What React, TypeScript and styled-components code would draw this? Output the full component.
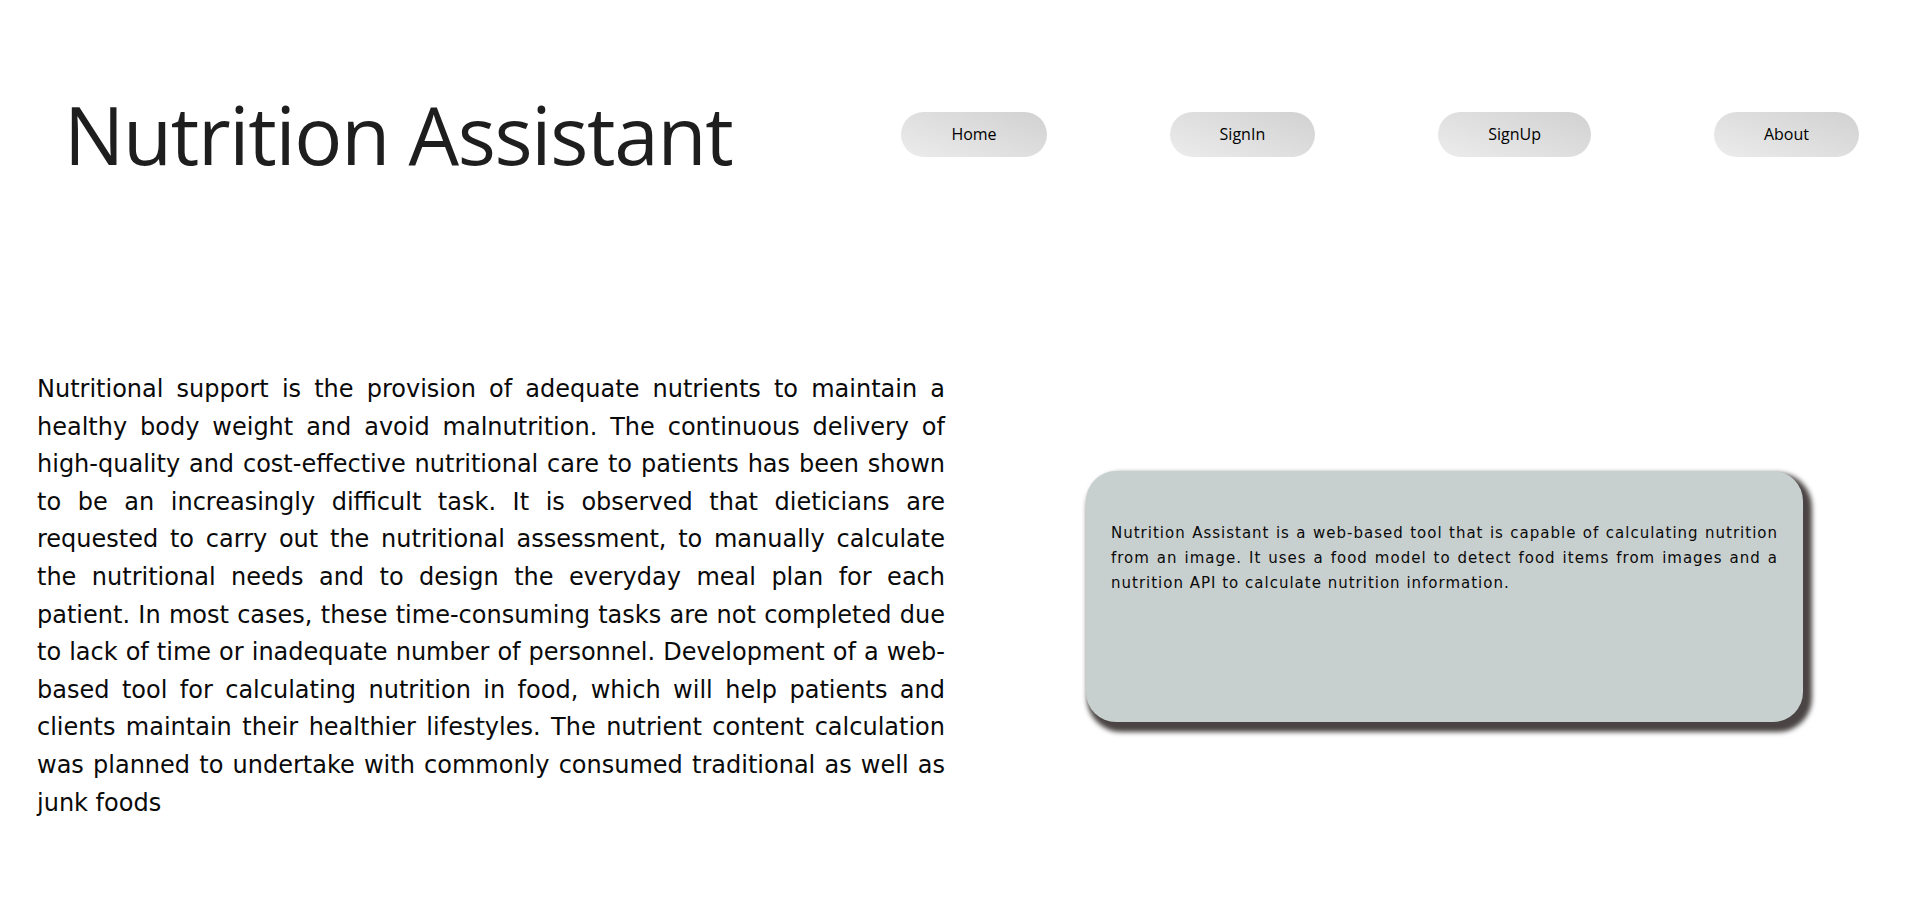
import React from "react";
import styled, { createGlobalStyle } from "styled-components";

const GlobalStyle = createGlobalStyle`
  html, body {
    margin: 0;
    padding: 0;
    background: #ffffff;
  }
  * { box-sizing: border-box; }
`;

const Page = styled.div`
  width: 100%;
  background: #ffffff;
`;

const Header = styled.header`
  display: flex;
  align-items: center;
  padding: 94px 61px 0 64px;
`;

const Title = styled.h1`
  margin: 0;
  font-family: "Open Sans", "Noto Sans", sans-serif;
  font-weight: 400;
  font-size: 80px;
  line-height: 80px;
  letter-spacing: -1.3px;
  color: #1e1e1e;
  white-space: nowrap;
`;

const Nav = styled.nav`
  margin-left: auto;
  display: flex;
  align-items: center;
  gap: 123px;
`;

const NavButton = styled.a`
  display: flex;
  align-items: center;
  justify-content: center;
  height: 45px;
  padding: 0 50px;
  border-radius: 23px;
  background: linear-gradient(20deg, #ececec 0%, #d1d1d1 100%);
  font-family: "Open Sans", "Noto Sans", sans-serif;
  font-size: 16px;
  color: #000000;
  text-decoration: none;
  cursor: pointer;
`;

const Main = styled.main`
  display: grid;
  grid-template-columns: 908px 717px;
  column-gap: 141px;
  align-items: center;
  padding: 197px 0 0 37px;
`;

const Intro = styled.p`
  margin: 0;
  font-family: "DejaVu Sans", Verdana, sans-serif;
  font-size: 24px;
  line-height: 37.6px;
  text-align: justify;
  color: #0a0a0a;
`;

const Card = styled.section`
  min-height: 251px;
  padding: 50px 25px 30px 25px;
  background: #c8d0cf;
  border-radius: 30px;
  box-shadow: 5px 6px 5px 4px #4a4444;
`;

const CardText = styled.p`
  margin: 0;
  font-family: "DejaVu Sans", Verdana, sans-serif;
  font-size: 15px;
  line-height: 25px;
  letter-spacing: 1px;
  text-align: justify;
  color: #0a0a0a;
`;

const navItems = ["Home", "SignIn", "SignUp", "About"];

export default function App() {
  return (
    <Page>
      <GlobalStyle />
      <Header>
        <Title>Nutrition Assistant</Title>
        <Nav>
          {navItems.map((item) => (
            <NavButton key={item}>{item}</NavButton>
          ))}
        </Nav>
      </Header>
      <Main>
        <Intro>
          Nutritional support is the provision of adequate nutrients to maintain a healthy body
          weight and avoid malnutrition. The continuous delivery of high-quality and
          cost-effective nutritional care to patients has been shown to be an increasingly
          difficult task. It is observed that dieticians are requested to carry out the
          nutritional assessment, to manually calculate the nutritional needs and to design the
          everyday meal plan for each patient. In most cases, these time-consuming tasks are not
          completed due to lack of time or inadequate number of personnel. Development of a
          web-based tool for calculating nutrition in food, which will help patients and clients
          maintain their healthier lifestyles. The nutrient content calculation was planned to
          undertake with commonly consumed traditional as well as junk foods
        </Intro>
        <Card>
          <CardText>
            Nutrition Assistant is a web-based tool that is capable of calculating nutrition from
            an image. It uses a food model to detect food items from images and a nutrition API to
            calculate nutrition information.
          </CardText>
        </Card>
      </Main>
    </Page>
  );
}
